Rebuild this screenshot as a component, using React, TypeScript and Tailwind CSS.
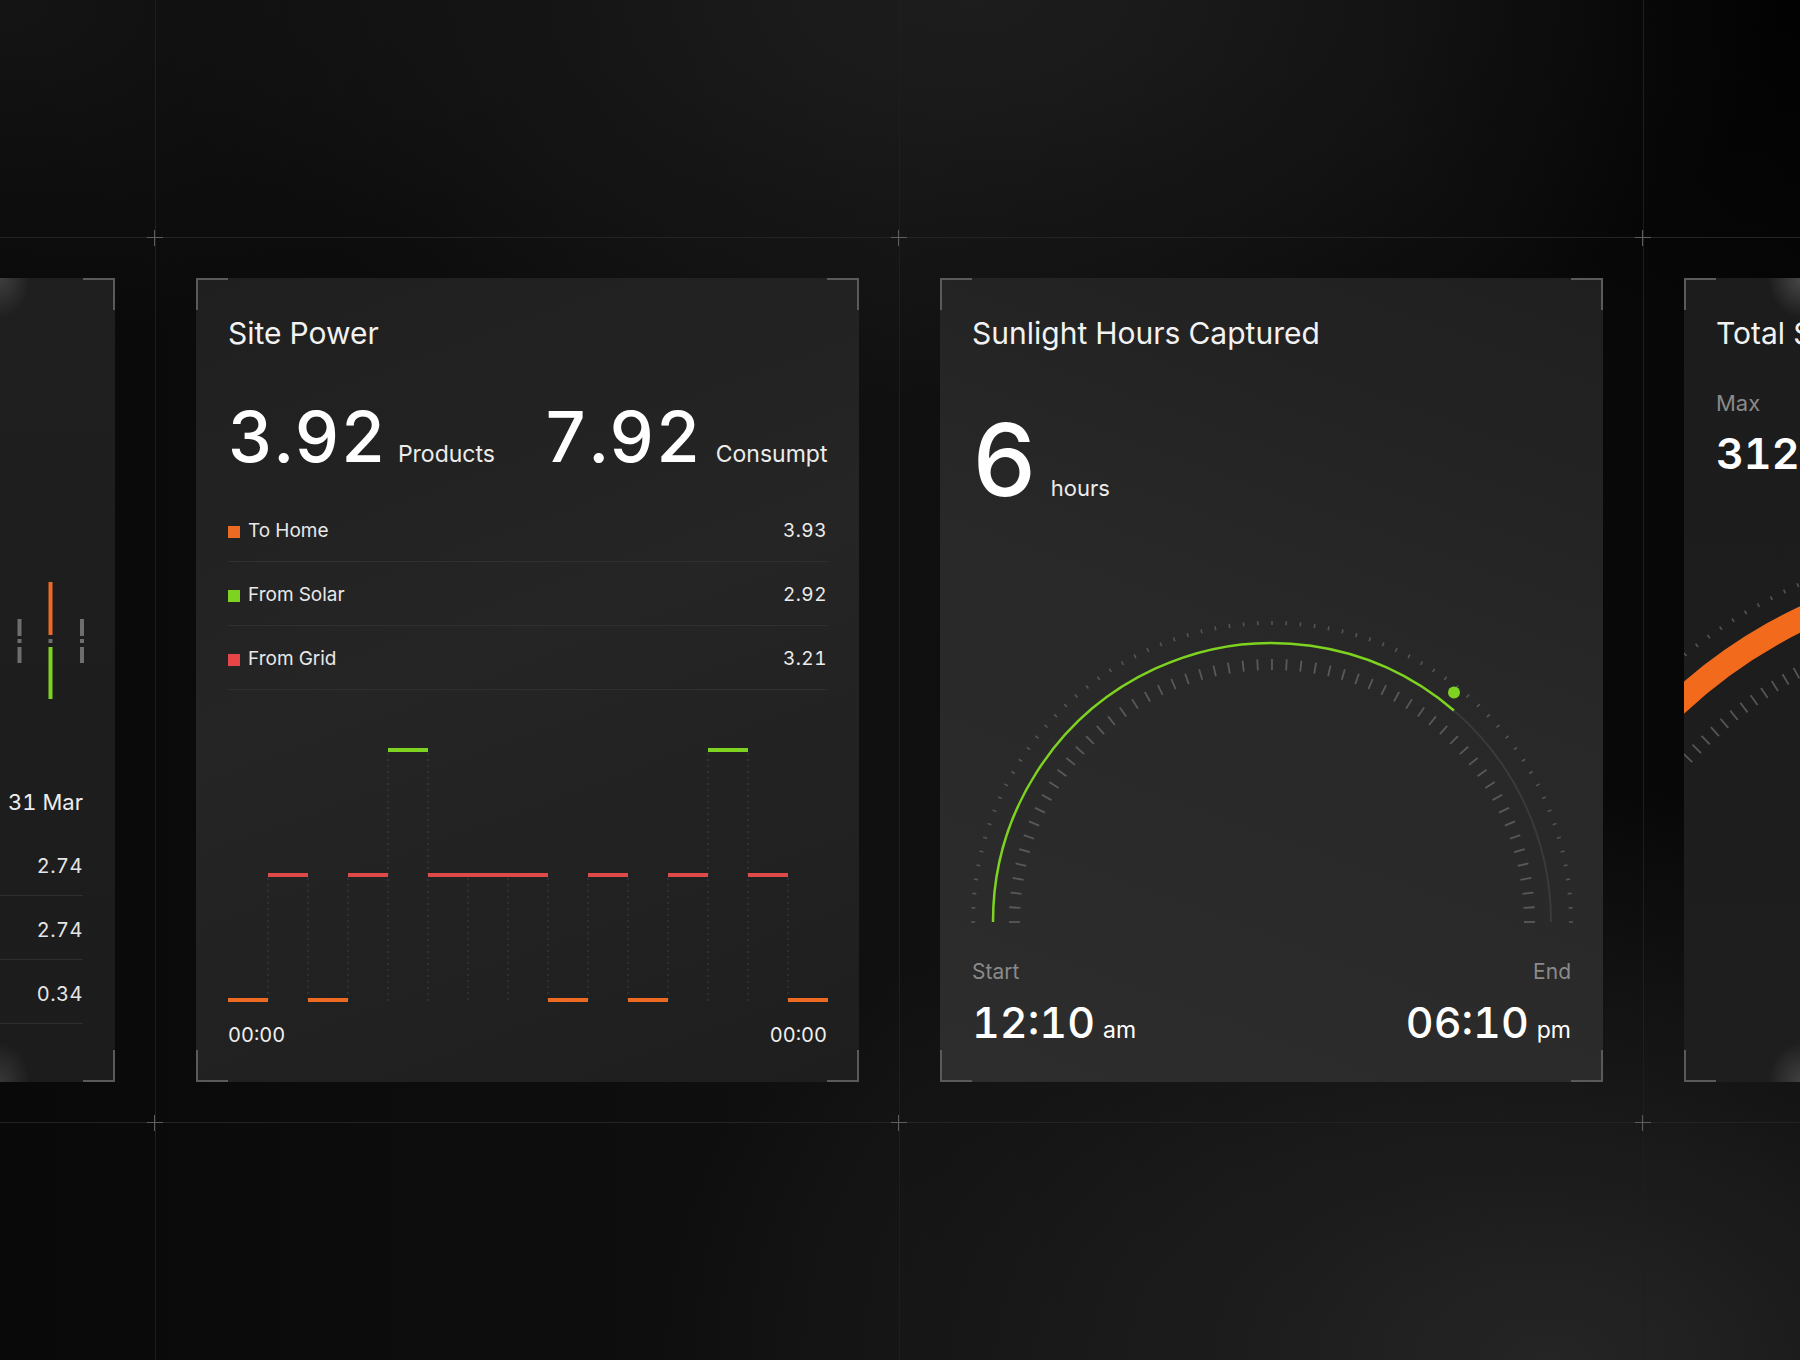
import React from "react";

type Level = "L" | "M" | "H";

const steps: Level[] = ["L", "M", "L", "M", "H", "M", "M", "M", "L", "M", "L", "M", "H", "M", "L"];
const levelY: Record<Level, number> = { H: 60, M: 185, L: 310 };
const levelColor: Record<Level, string> = { H: "#7ed321", M: "#de4a4a", L: "#ec6a24" };

const legend = [
  { label: "To Home", value: "3.93", swatch: "bg-[#ec6a24]" },
  { label: "From Solar", value: "2.92", swatch: "bg-[#7ed321]" },
  { label: "From Grid", value: "3.21", swatch: "bg-[#e84646]" },
];

function Brackets() {
  return (
    <>
      <div className="pointer-events-none absolute left-0 top-0 h-8 w-8 border-l-2 border-t-2 border-[#5a5a5a]" />
      <div className="pointer-events-none absolute right-0 top-0 h-8 w-8 border-r-2 border-t-2 border-[#5a5a5a]" />
      <div className="pointer-events-none absolute bottom-0 left-0 h-8 w-8 border-b-2 border-l-2 border-[#5a5a5a]" />
      <div className="pointer-events-none absolute bottom-0 right-0 h-8 w-8 border-b-2 border-r-2 border-[#5a5a5a]" />
    </>
  );
}

function Cross({ top }: { top: string }) {
  return (
    <div className={`pointer-events-none absolute -right-2 z-10 h-4 w-4 ${top}`}>
      <div className="absolute left-0 top-[7px] h-px w-4 bg-[#5e5e5e]" />
      <div className="absolute left-[7px] top-0 h-4 w-px bg-[#5e5e5e]" />
    </div>
  );
}

function Column({ children }: { children: React.ReactNode }) {
  return (
    <div className="relative flex h-[1360px] w-[744px] shrink-0 flex-col border-r border-[#1e1e1e]">
      <div className="h-[238px] border-b border-[#232323]" />
      <div className="h-[885px] border-b border-[#232323] p-10">{children}</div>
      <div className="flex-1" />
      <Cross top="top-[230px]" />
      <Cross top="top-[1115px]" />
    </div>
  );
}

function LeftCard() {
  return (
    <div className="relative h-full overflow-hidden bg-[radial-gradient(ellipse_30px_40px_at_548px_0px,rgba(255,255,255,0.14),transparent_100%),radial-gradient(ellipse_30px_40px_at_548px_100%,rgba(255,255,255,0.12),transparent_100%),linear-gradient(180deg,#1f1f1f,#1c1c1c)] px-8 pt-10">
      <Brackets />
      <svg width={600} height={160} className="mt-[242px] block">
        <rect x={533.5} y={59} width={4} height={17} fill="#6e6e6e" />
        <rect x={533.5} y={79} width={4} height={4} fill="#6e6e6e" />
        <rect x={533.5} y={87} width={4} height={16} fill="#6e6e6e" />
        <rect x={564.5} y={22} width={4} height={53} fill="#ec6a24" />
        <rect x={564.5} y={79} width={4} height={4} fill="#6e6e6e" />
        <rect x={564.5} y={87} width={4} height={52} fill="#7ed321" />
        <rect x={596} y={59} width={4} height={17} fill="#6e6e6e" />
        <rect x={596} y={79} width={4} height={4} fill="#6e6e6e" />
        <rect x={596} y={87} width={4} height={16} fill="#6e6e6e" />
      </svg>
      <div className="mt-12 flex h-16 items-center justify-end pt-1 text-[22px] text-[#ededed]">31 Mar</div>
      {["2.74", "2.74", "0.34"].map((v, i) => (
        <div key={i} className="flex h-16 items-center justify-end border-b border-[#2e2e2e] pt-1 text-[20px] tracking-[0.5px] text-[#e6e6e6]">
          {v}
        </div>
      ))}
    </div>
  );
}

function SitePowerCard() {
  return (
    <div className="relative h-full overflow-hidden bg-[linear-gradient(160deg,#1f1f1f_0%,#252525_45%,#1e1e1e_100%)] px-8 pt-10 text-white">
      <Brackets />
      <h2 className="text-[30px] leading-[30px] text-[#f2f2f2]">Site Power</h2>
      <div className="mt-[54px] flex items-baseline">
        <span className="text-[70px] font-medium leading-[70px] tracking-[1px]">3.92</span>
        <span className="ml-[11px] text-[23px] text-[#ececec]">Products</span>
        <span className="ml-[48px] text-[70px] font-medium leading-[70px] tracking-[1px]">7.92</span>
        <span className="ml-[14px] text-[23px] text-[#ececec]">Consumpt</span>
      </div>
      <div className="mt-[26px]">
        {legend.map((r) => (
          <div key={r.label} className="flex h-16 items-center justify-between border-b border-[#303030] pt-1">
            <div className="flex items-center gap-2">
              <span className={`h-3 w-3 ${r.swatch}`} />
              <span className="text-[19px] text-[#e8e8e8]">{r.label}</span>
            </div>
            <span className="text-[19px] tracking-[0.5px] text-[#ececec]">{r.value}</span>
          </div>
        ))}
      </div>
      <svg width={600} height={320} className="block">
        {steps.slice(1).map((lv, i) => {
          const x = (i + 1) * 40;
          const top = Math.min(levelY[lv], levelY[steps[i]]) + 3;
          return (
            <line key={i} x1={x} x2={x} y1={top} y2={313} stroke="#3b3b3b" strokeWidth={1.2} strokeDasharray="2 4" />
          );
        })}
        {steps.map((lv, i) => (
          <rect key={i} x={i * 40} y={levelY[lv] - 2} width={40} height={4} fill={levelColor[lv]} />
        ))}
      </svg>
      <div className="mt-[15px] flex justify-between text-[20px] leading-[20px] text-[#f0f0f0]">
        <span>00:00</span>
        <span>00:00</span>
      </div>
    </div>
  );
}

function SunGauge() {
  const cx = 300;
  const cy = 306;
  const inner = Array.from({ length: 57 }, (_, i) => (Math.PI * i) / 56);
  const outer = Array.from({ length: 67 }, (_, i) => (Math.PI * i) / 66);
  const tick = (t: number, r1: number, r2: number) => ({
    x1: cx - r1 * Math.cos(t),
    y1: cy - r1 * Math.sin(t),
    x2: cx - r2 * Math.cos(t),
    y2: cy - r2 * Math.sin(t),
  });
  return (
    <svg width={600} height={310} className="mt-[106px] block overflow-visible">
      {outer.map((t, i) => (
        <line key={`o${i}`} {...tick(t, 297, 301)} stroke="#555555" strokeWidth={1.6} />
      ))}
      {inner.map((t, i) => (
        <line key={`i${i}`} {...tick(t, 252, 263)} stroke="#595959" strokeWidth={1.8} />
      ))}
      <path d="M 481.9 94.5 A 279 279 0 0 1 579 306" fill="none" stroke="#3a3a3a" strokeWidth={2} />
      <path d="M 21 306 A 279 279 0 0 1 481.9 94.5" fill="none" stroke="#7ed321" strokeWidth={2.5} />
      <circle cx={482} cy={76.5} r={6} fill="#7ed321" />
    </svg>
  );
}

function SunlightCard() {
  return (
    <div className="relative h-full overflow-hidden bg-[linear-gradient(200deg,#1f1f1f_0%,#282828_45%,#2d2d2d_100%)] px-8 pt-10 text-white">
      <Brackets />
      <h2 className="text-[30px] leading-[30px] text-[#f2f2f2]">Sunlight Hours Captured</h2>
      <div className="mt-[62px] flex items-baseline">
        <span className="text-[100px] font-medium leading-[100px]">6</span>
        <span className="ml-[14px] text-[22px] text-[#ececec]">hours</span>
      </div>
      <SunGauge />
      <div className="mt-[35px] flex justify-between text-[21px] leading-[21px] text-[#8a8a8a]">
        <span>Start</span>
        <span>End</span>
      </div>
      <div className="mt-[19px] flex justify-between">
        <div className="flex items-baseline">
          <span className="text-[43px] font-medium leading-[43px]">12:10</span>
          <span className="ml-2 text-[23px]">am</span>
        </div>
        <div className="flex items-baseline">
          <span className="text-[43px] font-medium leading-[43px]">06:10</span>
          <span className="ml-2 text-[23px]">pm</span>
        </div>
      </div>
    </div>
  );
}

function TotalCard() {
  const cx = 332;
  const cy = 788;
  const ticks = Array.from({ length: 60 }, (_, i) => Math.PI - (i * 1.6 * Math.PI) / 180);
  const pt = (t: number, r: number) => [cx + r * Math.cos(t), cy - r * Math.sin(t)];
  const end = pt((100 * Math.PI) / 180, 496);
  return (
    <div className="relative h-full overflow-hidden bg-[radial-gradient(ellipse_34px_40px_at_118px_0px,rgba(255,255,255,0.2),transparent_100%),radial-gradient(ellipse_34px_40px_at_118px_100%,rgba(255,255,255,0.16),transparent_100%),linear-gradient(180deg,#1c1c1c,#1e1e1e)] px-8 pt-10 text-white">
      <Brackets />
      <h2 className="whitespace-nowrap text-[30px] leading-[30px] text-[#f2f2f2]">Total Solar Generated</h2>
      <div className="mt-[44px] text-[22px] leading-[22px] text-[#8a8a8a]">Max</div>
      <div className="mt-[18px] whitespace-nowrap text-[43px] font-semibold leading-[43px]">312</div>
      <svg width={664} height={600} viewBox="0 197 664 600" className="-ml-8 block">
        {ticks.map((t, i) => {
          const [x1, y1] = pt(t, 526);
          const [x2, y2] = pt(t, 530);
          return <line key={`o${i}`} x1={x1} y1={y1} x2={x2} y2={y2} stroke="#555555" strokeWidth={1.6} />;
        })}
        {ticks.map((t, i) => {
          const [x1, y1] = pt(t, 444);
          const [x2, y2] = pt(t, 456);
          return <line key={`i${i}`} x1={x1} y1={y1} x2={x2} y2={y2} stroke="#555555" strokeWidth={1.8} />;
        })}
        <path d={`M ${cx - 496} ${cy} A 496 496 0 0 1 ${end[0]} ${end[1]}`} fill="none" stroke="#f26b1d" strokeWidth={24} />
      </svg>
    </div>
  );
}

export default function App() {
  return (
    <div className="relative h-[1360px] w-[1800px] overflow-hidden bg-[radial-gradient(ellipse_45%_30%_at_54%_0%,#1d1d1d_0%,transparent_100%),radial-gradient(ellipse_50%_42%_at_86%_100%,#252525_0%,transparent_100%),radial-gradient(ellipse_30%_25%_at_0%_0%,#141414_0%,transparent_100%),radial-gradient(ellipse_25%_25%_at_100%_0%,#020202_0%,transparent_100%),linear-gradient(90deg,#090909_0%,#101010_50%,#060606_100%)] font-[Inter,sans-serif] tabular-nums">
      <div className="-ml-[588px] flex">
        <Column>
          <LeftCard />
        </Column>
        <Column>
          <SitePowerCard />
        </Column>
        <Column>
          <SunlightCard />
        </Column>
        <Column>
          <TotalCard />
        </Column>
      </div>
    </div>
  );
}
